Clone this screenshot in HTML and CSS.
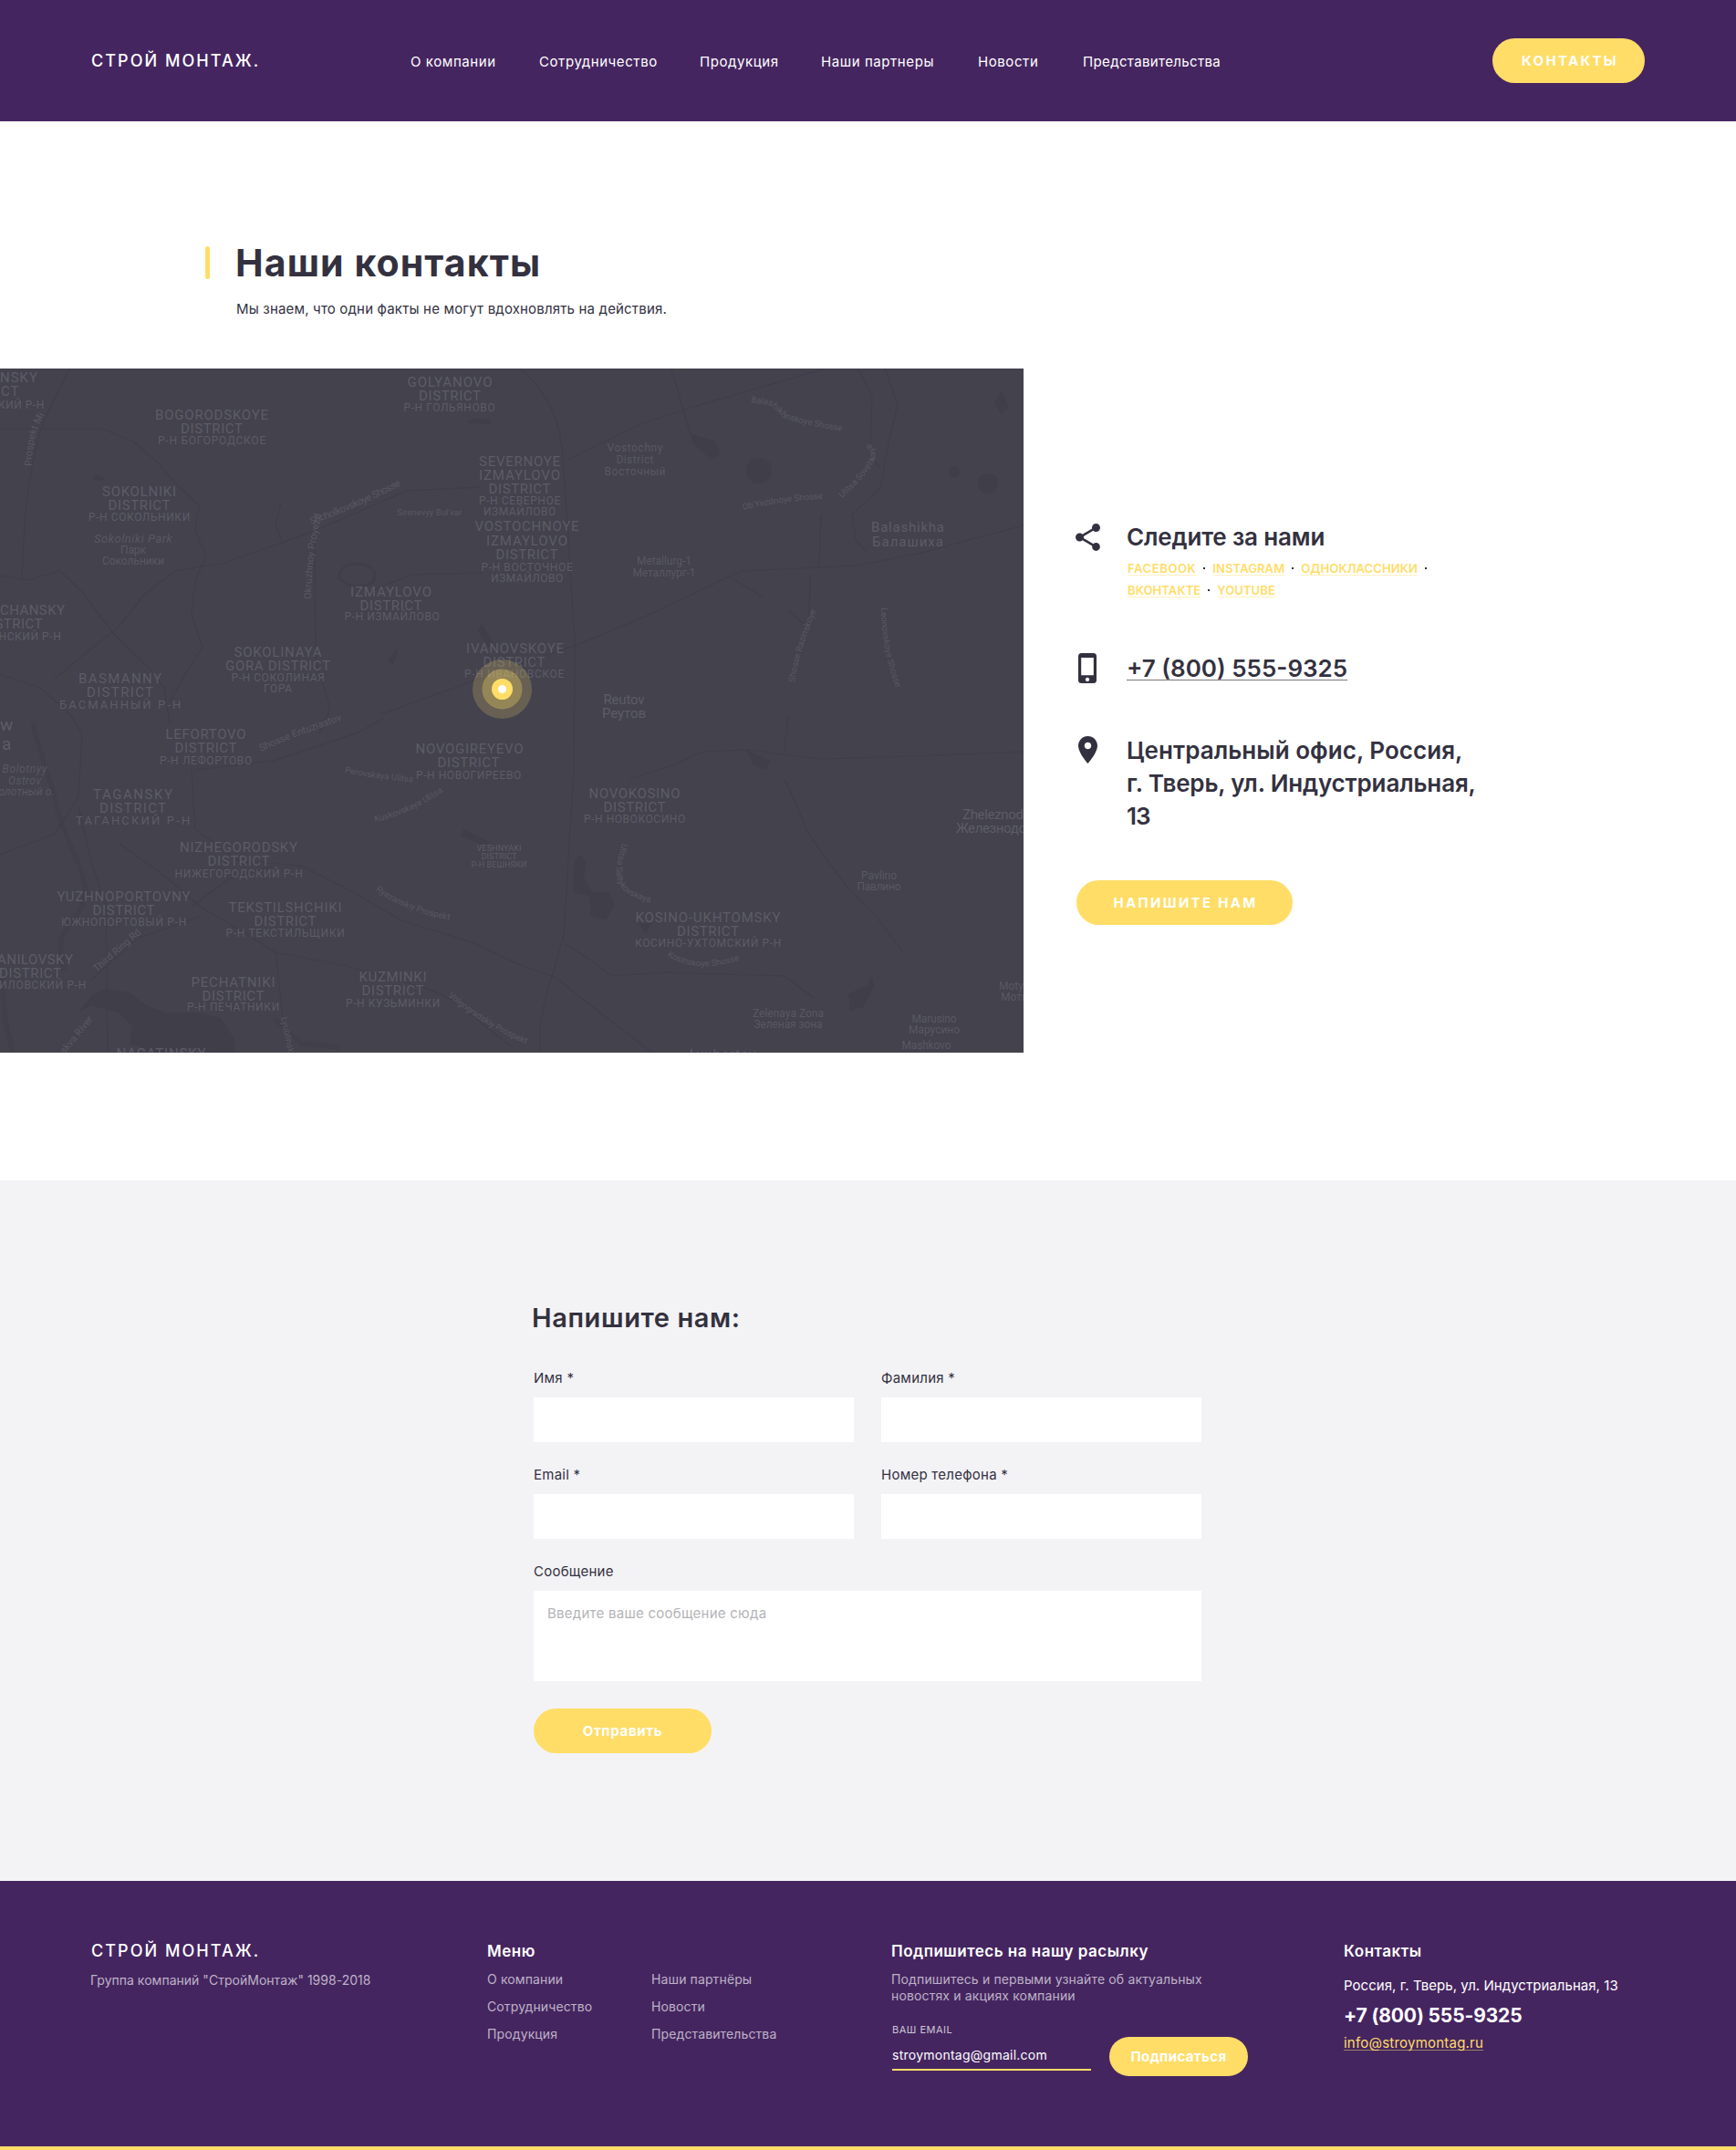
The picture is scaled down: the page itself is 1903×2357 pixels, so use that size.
FILE: index.html
```html
<!DOCTYPE html>
<html lang="ru">
<head>
<meta charset="utf-8">
<title>Строй Монтаж — Контакты</title>
<link rel="stylesheet" href="styles.css">
</head>
<body>
<header class="header">
  <a class="logo">СТРОЙ МОНТАЖ.</a>
  <nav class="nav">
    <a>О компании</a><a>Сотрудничество</a><a>Продукция</a><a>Наши партнеры</a><a>Новости</a><a>Представительства</a>
  </nav>
  <a class="btn btn-header">КОНТАКТЫ</a>
</header>

<main>
<section class="contacts">
  <div class="heading">
    <span class="heading-bar"></span>
    <h1>Наши контакты</h1>
    <p>Мы знаем, что одни факты не могут вдохновлять на действия.</p>
  </div>
  <div class="contacts-grid">
    <svg class="map" viewBox="0 0 1122 750" width="1122" height="750">
      <rect width="1122" height="750" fill="#43424d"/>
      <g class="water">
        <path d="M36 388C42 420 56 450 62 480C70 515 92 545 94 575C90 600 68 610 66 632L70 660"/>
        <path d="M2 668L6 715L14 750"/>
        <path d="M300 712L330 740L372 744"/>
      </g>
      <g class="lake">
        <path d="M102 686l14-6 26 4 18 14 22 8 36 0 24 6 14 22 4 28-16 0-10-12-24-6-24 6-12 12-8 0-6-16-18-6 2-20-14-14-30-8-14 8z"/>
        <path d="M103 123a6 4 0 1 1 10 0zM513 60a13 4 0 1 1 24 1z"/>
        <path d="M524 288l12 18 4-6-12-20zM426 320l8-12 2 3-6 14z"/>
        <circle cx="832" cy="112" r="14"/>
        <path d="M758 72l26 8 6 14-10 6-22-20zM1090 38l8-14 8 18-8 8z"/>
        <circle cx="1046" cy="113" r="6"/><circle cx="1083" cy="126" r="11"/>
        <path d="M630 540q8-14 12 2l-2 18 10 14 18 0 6 14-10 16-16-4-2-22-18-4z"/>
        <path d="M699 608h15l-6 12zM508 505l28 14-4 4-26-10zM818 418l26 12-4 10-14-6z"/>
        <path d="M930 686l20-10 6-10 2 12-12 22-14 4z"/>
      </g>
      <path class="pond" d="M371 230q4-22 32-14q14 8 4 20q-24 8-34-6z"/>
      <g class="road">
        <path d="M76 0L48 58C30 110 26 170 24 232M0 66H112L146 80L172 102L190 124L218 150L214 178L226 206L214 232L210 270L222 305L200 340L184 370"/>
        <path d="M0 227L30 232L66 222L90 245L124 290L165 330L180 350L186 390M60 340L90 315L128 285L158 248L192 222L246 213L340 180L446 134L526 130"/>
        <path d="M308 148L302 172L310 190M345 190L346 320L362 372L350 400M404 245L450 226L530 224M0 335L44 350L76 378L90 400"/>
        <path d="M420 378L540 335L640 300L700 275L762 246L812 222L940 216L1010 202L1122 172"/>
        <path d="M570 0C600 24 616 60 617 100L624 200L630 300L629 440L624 520L618 620C600 690 590 700 592 750"/>
        <path d="M736 0L756 70L764 82M622 100L700 62L760 42L905 0M940 0L956 30L954 90L964 110M970 0L984 40L972 90L966 130L934 160M900 160L898 218M934 160L938 188L950 200"/>
        <path d="M802 230L836 250M864 266L886 284M888 226L887 280M864 380L860 420M690 450L740 434L770 420L820 418L900 428L1000 425L1122 420"/>
        <path d="M860 450L874 480L884 506L900 530L930 570L960 600L990 640M210 440L214 505L262 540L330 545L380 570L440 605L520 630L562 650"/>
        <path d="M90 400L86 470L60 510L0 533M86 480L100 540L116 590L118 750M130 520L180 556L220 590L270 620L302 640L310 712M302 640L380 655L470 680L500 695L562 745"/>
        <path d="M214 440L300 430L390 400L420 384M210 590L250 560L300 545M100 670L150 625L220 600M618 630L650 650L670 666L730 662L860 666L892 690M560 650L610 668L660 708L715 750"/>
      </g>
      <g class="district">
        <text x="0" y="15">NSKY</text><text x="1" y="30">CT</text>
        <g class="mid">
          <text x="232.5" y="56" textLength="125">BOGORODSKOYE</text><text x="232.5" y="71" textLength="69">DISTRICT</text>
          <text x="493.5" y="19.5" textLength="94">GOLYANOVO</text><text x="493.5" y="34.5" textLength="69">DISTRICT</text>
          <text x="153" y="140" textLength="82">SOKOLNIKI</text><text x="153" y="154.5" textLength="69">DISTRICT</text>
          <text x="570" y="106.5" textLength="90">SEVERNOYE</text><text x="570" y="121.5" textLength="90">IZMAYLOVO</text><text x="570" y="136.5" textLength="69">DISTRICT</text>
          <text x="578" y="178" textLength="115">VOSTOCHNOYE</text><text x="578" y="193.5" textLength="90">IZMAYLOVO</text><text x="578" y="208.5" textLength="69">DISTRICT</text>
          <text x="429" y="250" textLength="90">IZMAYLOVO</text><text x="429" y="265" textLength="69">DISTRICT</text>
          <text x="305" y="315.5" textLength="97">SOKOLINAYA</text><text x="305" y="330.5" textLength="116">GORA DISTRICT</text>
          <text x="132" y="344.5" textLength="92">BASMANNY</text><text x="132" y="359.5" textLength="74">DISTRICT</text>
          <text x="565" y="312" textLength="108">IVANOVSKOYE</text><text x="564" y="326.5" textLength="69">DISTRICT</text>
          <text x="226" y="406" textLength="89">LEFORTOVO</text><text x="226" y="421" textLength="69">DISTRICT</text>
          <text x="515" y="422" textLength="119">NOVOGIREYEVO</text><text x="514" y="437" textLength="69">DISTRICT</text>
          <text x="146" y="472" textLength="88">TAGANSKY</text><text x="146" y="487" textLength="74">DISTRICT</text>
          <text x="262" y="530" textLength="130">NIZHEGORODSKY</text><text x="262" y="544.5" textLength="69">DISTRICT</text>
          <text x="136" y="584" textLength="147">YUZHNOPORTOVNY</text><text x="136" y="599" textLength="69">DISTRICT</text>
          <text x="313" y="596" textLength="125">TEKSTILSHCHIKI</text><text x="313" y="610.5" textLength="69">DISTRICT</text>
          <text x="256" y="678" textLength="93">PECHATNIKI</text><text x="256" y="692.5" textLength="69">DISTRICT</text>
          <text x="431" y="672" textLength="75">KUZMINKI</text><text x="431" y="687" textLength="69">DISTRICT</text>
          <text x="177" y="756" textLength="99">NAGATINSKY</text>
          <text x="696" y="471" textLength="101">NOVOKOSINO</text><text x="696" y="485.5" textLength="69">DISTRICT</text>
          <text x="776.5" y="607" textLength="160">KOSINO-UKHTOMSKY</text><text x="776.5" y="622" textLength="69">DISTRICT</text>
        </g>
        <g class="end">
          <text x="72" y="270" textLength="72">CHANSKY</text><text x="47.5" y="285" textLength="53">STRICT</text>
          <text x="81" y="653" textLength="84">ANILOVSKY</text><text x="68" y="668" textLength="69">DISTRICT</text>
        </g>
      </g>
      <g class="native">
        <g class="mid">
          <text x="232.5" y="83" textLength="119">Р-Н БОГОРОДСКОЕ</text>
          <text x="493" y="47" textLength="101">Р-Н ГОЛЬЯНОВО</text>
          <text x="153" y="167" textLength="112">Р-Н СОКОЛЬНИКИ</text>
          <text x="570" y="149" textLength="90">Р-Н СЕВЕРНОЕ</text><text x="570" y="161" textLength="80">ИЗМАЙЛОВО</text>
          <text x="578" y="222" textLength="101">Р-Н ВОСТОЧНОЕ</text><text x="578" y="233.5" textLength="80">ИЗМАЙЛОВО</text>
          <text x="430" y="276" textLength="105">Р-Н ИЗМАЙЛОВО</text>
          <text x="305" y="342.5" textLength="103">Р-Н СОКОЛИНАЯ</text><text x="305" y="354.5" textLength="32">ГОРА</text>
          <text class="big" x="132" y="373" textLength="134">БАСМАННЫЙ Р-Н</text>
          <text x="564" y="339" textLength="110">Р-Н ИВАНОВСКОЕ</text>
          <text x="226" y="434" textLength="102">Р-Н ЛЕФОРТОВО</text>
          <text x="514" y="450" textLength="116">Р-Н НОВОГИРЕЕВО</text>
          <text class="big" x="146" y="500" textLength="126">ТАГАНСКИЙ Р-Н</text>
          <text x="262" y="557.5" textLength="141">НИЖЕГОРОДСКИЙ Р-Н</text>
          <text x="136" y="611" textLength="138">ЮЖНОПОРТОВЫЙ Р-Н</text>
          <text x="313" y="623" textLength="131">Р-Н ТЕКСТИЛЬЩИКИ</text>
          <text x="256" y="704" textLength="102">Р-Н ПЕЧАТНИКИ</text>
          <text x="431" y="699.5" textLength="104">Р-Н КУЗЬМИНКИ</text>
          <text x="696" y="498" textLength="112">Р-Н НОВОКОСИНО</text>
          <text x="776.5" y="634" textLength="161">КОСИНО-УХТОМСКИЙ Р-Н</text>
        </g>
        <g class="end">
          <text x="49" y="44" textLength="51">КИЙ Р-Н</text>
          <text x="67.5" y="298" textLength="69">НСКИЙ Р-Н</text>
          <text x="95" y="680" textLength="96">ИЛОВСКИЙ Р-Н</text>
        </g>
      </g>
      <g class="tiny mid">
        <text x="547" y="529" textLength="49">VESHNYAKI</text><text x="547" y="538" textLength="39">DISTRICT</text><text x="547" y="547" textLength="61">Р-Н ВЕШНЯКИ</text>
      </g>
      <g class="place mid">
        <text class="park" x="146" y="190.5" textLength="86">Sokolniki Park</text><text x="146" y="202.5" textLength="28">Парк</text><text x="146" y="214.5" textLength="68">Сокольники</text>
        <text x="696" y="90.5" textLength="61">Vostochny</text><text x="696" y="104" textLength="41">District</text><text x="696" y="117" textLength="67">Восточный</text>
        <text x="728" y="215" textLength="60">Metallurg-1</text><text x="728" y="228" textLength="69">Металлург-1</text>
        <text class="isle" x="27" y="443" textLength="49">Bolotnyy</text><text class="isle" x="27" y="456" textLength="36">Ostrov</text><text class="isle" x="29" y="468" textLength="61">олотный о.</text>
        <text x="963.5" y="560" textLength="39">Pavlino</text><text x="963.5" y="572" textLength="48">Павлино</text>
        <text x="864" y="711" textLength="78">Zelenaya Zona</text><text x="864" y="723" textLength="75">Зеленая зона</text>
        <text x="1024" y="717" textLength="49">Marusino</text><text x="1024" y="729" textLength="56">Марусино</text><text x="1015.5" y="746" textLength="54">Mashkovo</text>
      </g>
      <g class="place"><text x="1095" y="681">Moty</text><text x="1097" y="693">Мотя</text></g>
      <g class="town">
        <g class="mid">
          <text x="995" y="179" textLength="80">Balashikha</text><text x="995" y="195" textLength="78">Балашиха</text>
          <text x="684" y="368" textLength="45">Reutov</text><text x="684" y="383" textLength="48">Реутов</text>
          <text x="792" y="757" textLength="72">Lyubertsy</text>
        </g>
        <text x="1055" y="494" textLength="67">Zheleznod</text><text x="1048" y="509" textLength="77">Железнодо</text>
      </g>
      <g class="city"><text x="0" y="397">w</text><text x="2" y="418">a</text></g>
      <defs>
        <path id="s1" d="M35 107Q34 75 49 50"/><path id="s2" d="M341 171Q390 154 443 126"/><path id="s3" d="M435 161H520"/>
        <path id="s4" d="M341 253Q341 210 352 160"/><path id="s5" d="M823 37L843 40Q848 42 858 54Q880 62 930 70"/><path id="s6" d="M815 155Q850 146 910 142"/>
        <path id="s7" d="M923 142Q950 118 960 98Q960 90 951 78"/><path id="s8" d="M871 344Q876 310 896 262"/><path id="s9" d="M966 262Q966 310 984 355"/>
        <path id="s10" d="M286 420Q325 402 380 384"/><path id="s11" d="M378 443Q410 450 460 454"/><path id="s12" d="M411 497Q450 489 490 461"/>
        <path id="s13" d="M412 572Q440 595 500 606"/><path id="s14" d="M106 662L160 615"/><path id="s15" d="M491 688Q530 722 585 744"/>
        <path id="s16" d="M308 712Q312 730 318 760"/><path id="s17" d="M71 752L105 710"/><path id="s18" d="M682 520C670 560 673 576 715 586"/>
        <path id="s19" d="M731 644Q765 665 815 647"/>
      </defs>
      <g class="street">
        <text><textPath href="#s1">Prospekt Mira</textPath></text>
        <text><textPath href="#s2" textLength="108">Shcholkovskoye Shosse</textPath></text>
        <text class="sm"><textPath href="#s3">Sirenevyy Bul'var</textPath></text>
        <text><textPath href="#s4">Okruzhnoy Proyezd</textPath></text>
        <text class="sm"><textPath href="#s5">Balashikhinskoye Shosse</textPath></text>
        <text class="sm"><textPath href="#s6">Ob'Yezdnoye Shosse</textPath></text>
        <text class="sm"><textPath href="#s7">Ulitsa Sovetskaya</textPath></text>
        <text class="sm"><textPath href="#s8">Shosse Razinskoye</textPath></text>
        <text class="sm"><textPath href="#s9">Leonovskoye Shosse</textPath></text>
        <text><textPath href="#s10">Shosse Entuziastov</textPath></text>
        <text class="sm"><textPath href="#s11">Perovskaya Ulitsa</textPath></text>
        <text class="sm"><textPath href="#s12">Kuskovskaya Ulitsa</textPath></text>
        <text class="sm"><textPath href="#s13">Ryazanskiy Prospekt</textPath></text>
        <text><textPath href="#s14">Third Ring Rd</textPath></text>
        <text class="sm"><textPath href="#s15">Volgogradskiy Prospekt</textPath></text>
        <text class="sm"><textPath href="#s16">Lyublinsk</textPath></text>
        <text><textPath href="#s17">skva River</textPath></text>
        <text class="sm"><textPath href="#s18">Ulitsa Saltykovskaya</textPath></text>
        <text class="sm"><textPath href="#s19">Kosinskoye Shosse</textPath></text>
      </g>
      <g fill="#ffdd67">
        <circle cx="550.5" cy="351.5" r="32.5" fill-opacity=".2"/>
        <circle cx="550.5" cy="351.5" r="22" fill-opacity=".3"/>
        <circle cx="550.5" cy="351.5" r="11.5"/>
        <circle cx="550.5" cy="351.5" r="4.5" fill="#fff"/>
      </g>
    </svg>
    <div class="info">
      <div class="info-row">
        <svg class="icon" width="27" height="30" viewBox="3 2 18 20"><path d="M18 16.08c-.76 0-1.44.3-1.96.77L8.91 12.7c.05-.23.09-.46.09-.7s-.04-.47-.09-.7l7.05-4.11c.54.5 1.25.81 2.04.81 1.66 0 3-1.34 3-3s-1.34-3-3-3-3 1.34-3 3c0 .24.04.47.09.7L8.04 9.81C7.5 9.31 6.79 9 6 9c-1.66 0-3 1.34-3 3s1.34 3 3 3c.79 0 1.5-.31 2.04-.81l7.12 4.16c-.05.21-.08.43-.08.65 0 1.61 1.31 2.92 2.92 2.92s2.92-1.31 2.92-2.92-1.31-2.92-2.92-2.92z"/></svg>
        <div>
          <h2>Следите за нами</h2>
          <div class="social">
            <a>FACEBOOK</a><i></i><a>INSTAGRAM</a><i></i><a>ОДНОКЛАССНИКИ</a><i></i><br><a>ВКОНТАКТЕ</a><i></i><a>YOUTUBE</a>
          </div>
        </div>
      </div>
      <div class="info-row row-phone">
        <svg class="icon icon-phone" width="20" height="33" viewBox="0 0 20 33"><path fill-rule="evenodd" d="M3.5 0h13A3.5 3.5 0 0 1 20 3.5v26a3.5 3.5 0 0 1-3.5 3.500h-13A3.5 3.5 0 0 1 0 29.5v-26A3.5 3.5 0 0 1 3.5 0zM3.200 5v19.200h13.600V5zM10 26.800a2.200 2.200 0 1 0 .01 0z"/></svg>
        <a class="phone">+7 (800) 555-9325</a>
      </div>
      <div class="info-row row-address">
        <svg class="icon icon-pin" width="21" height="30" viewBox="5 2 14 20"><path d="M12 2C8.13 2 5 5.13 5 9c0 5.25 7 13 7 13s7-7.75 7-13c0-3.87-3.13-7-7-7zm0 9.5c-1.38 0-2.5-1.12-2.5-2.5s1.12-2.5 2.5-2.5 2.5 1.12 2.5 2.5-1.12 2.5-2.5 2.5z"/></svg>
        <p class="address"><span class="wide">Центральный офис, Россия,</span><br>г. Тверь, ул. Индустриальная,<br><span class="tight">13</span></p>
      </div>
      <a class="btn btn-write">НАПИШИТЕ НАМ</a>
    </div>
  </div>
</section>

<section class="write">
  <form class="form">
    <h2>Напишите нам:</h2>
    <div class="fields">
      <label>Имя *<span class="input"></span></label>
      <label>Фамилия *<span class="input"></span></label>
      <label>Email *<span class="input"></span></label>
      <label>Номер телефона *<span class="input"></span></label>
      <label class="full">Сообщение<span class="input area">Введите ваше сообщение сюда</span></label>
    </div>
    <a class="btn btn-send">Отправить</a>
  </form>
</section>
</main>

<footer class="footer">
  <div class="f-brand">
    <a class="logo">СТРОЙ МОНТАЖ.</a>
    <p>Группа компаний "СтройМонтаж" 1998-2018</p>
  </div>
  <div class="f-menu">
    <h3>Меню</h3>
    <div class="f-links">
      <a>О компании</a><a>Наши партнёры</a>
      <a>Сотрудничество</a><a>Новости</a>
      <a>Продукция</a><a>Представительства</a>
    </div>
  </div>
  <div class="f-sub">
    <h3>Подпишитесь на нашу расылку</h3>
    <p>Подпишитесь и первыми узнайте об актуальных<br>новостях и акциях компании</p>
    <div class="f-form">
      <label class="f-field"><span>ВАШ EMAIL</span>stroymontag@gmail.com</label>
      <a class="btn btn-sub">Подписаться</a>
    </div>
  </div>
  <div class="f-contacts">
    <h3>Контакты</h3>
    <p>Россия, г. Тверь, ул. Индустриальная, 13</p>
    <b>+7 (800) 555-9325</b>
    <a>info@stroymontag.ru</a>
  </div>
</footer>
</body>
</html>
```
FILE: styles.css
```css
* { box-sizing: border-box; margin: 0; padding: 0; }

body {
  font-family: Inter, "Open Sans", sans-serif;
  font-size: 15px;
  line-height: 20px;
  color: #33313f;
  background: #fff;
}

h1, h2, h3 { font-weight: 600; }

/* Shared pieces */
.logo {
  display: block;
  font-size: 18px;
  line-height: 24px;
  font-weight: 500;
  letter-spacing: 2.05px;
  color: #fff;
  white-space: nowrap;
}

.btn {
  display: flex;
  align-items: center;
  justify-content: center;
  height: 49px;
  border-radius: 25px;
  background: #ffdd67;
  color: #fff;
  font-weight: 700;
}

/* Header */
.header {
  display: grid;
  grid-template-columns: 350px 1fr 167px;
  align-items: center;
  height: 133px;
  padding: 0 100px;
  background: #452560;
}

.nav {
  display: grid;
  grid-template-columns: 141px 176px 133px 172px 115px auto;
  padding-top: 2px;
  letter-spacing: .58px;
  color: #fff;
}

.nav a:last-child { letter-spacing: .36px; }

.btn-header { letter-spacing: 2.3px; padding-left: 3px; }

/* Contacts */
.contacts { padding: 129px 0 140px; }

.heading {
  display: grid;
  grid-template-columns: 5px 1fr;
  column-gap: 28px;
  align-items: center;
  padding: 0 0 53px 225px;
}

.heading-bar { height: 36px; border-radius: 3px; background: #ffdd67; }

h1 { font-size: 41px; line-height: 52px; font-weight: 700; letter-spacing: 1.1px; }

.heading p { grid-column: 2; margin-top: 13px; line-height: 24px; letter-spacing: .17px; padding-left: 1px; }

.contacts-grid { display: grid; grid-template-columns: 1122px 1fr; }

.map { display: block; overflow: hidden; font-family: Roboto, sans-serif; }
.map text { fill: #5d5c67; }
.district { font-size: 15px; letter-spacing: 1px; }
.native { font-size: 12px; letter-spacing: .8px; }
.native .big { font-size: 13px; }
.tiny { font-size: 9px; }
.mid { text-anchor: middle; }
.end { text-anchor: end; }
.place { font-size: 12px; }
.map .place text { fill: #595863; }
.place .park { font-size: 13px; font-style: italic; }
.place .isle { font-style: italic; }
.town { font-size: 15px; }
.city { font-size: 19px; }
.street { font-size: 11px; }
.map .street text { fill: #595863; }
.street .sm { font-size: 9.6px; }
.road { fill: none; stroke: #3f3e4a; stroke-width: 1.2; stroke-linejoin: round; }
.water { fill: none; stroke: #403f4a; stroke-width: 5; stroke-linejoin: round; }
.lake { fill: #3f3e49; }
.pond { fill: none; stroke: #3f3e49; stroke-width: 3; }

.info { padding: 167px 0 0 57px; }

.info-row {
  display: grid;
  grid-template-columns: 56px 1fr;
  align-items: start;
}

.icon { margin-top: 3px; fill: #33313f; }
.icon-phone { margin: 1px 0 0 3px; }
.icon-pin { margin: 2px 0 0 3px; }

.info h2, .phone, .address {
  font-size: 26px;
  line-height: 36px;
  font-weight: 600;
  letter-spacing: -.15px;
}

.social {
  margin-top: 4px;
  font-size: 13px;
  line-height: 24px;
  font-weight: 600;
  letter-spacing: .1px;
  color: #ffdd67;
  padding-left: 1px;
}

.social a {
  text-decoration: underline 1px #fff0c0;
  text-underline-offset: 2px;
  text-decoration-skip-ink: none;
}

.social a:first-child { letter-spacing: .6px; }

.social i {
  display: inline-block;
  width: 2px;
  height: 2px;
  margin: 0 8px 4px;
  background: #33313f;
}

.row-phone { margin-top: 56px; }

.phone {
  justify-self: start;
  letter-spacing: 0;
  text-decoration: underline 1px #77767f;
  text-underline-offset: 3px;
  text-decoration-skip-ink: none;
}

.row-address { margin-top: 54px; }
.address .wide { letter-spacing: .05px; }
.address .tight { letter-spacing: -1px; }

.btn-write { width: 237px; margin: 52px 0 0 1px; letter-spacing: 2.3px; padding-left: 2px; }

/* Message form */
.write { padding: 131px 0 140px; background: #f3f3f6; }

.form { width: 732px; margin: 0 0 0 585px; }

.form h2 { font-size: 29px; line-height: 40px; letter-spacing: .6px; margin-left: -2px; }

.fields {
  display: grid;
  grid-template-columns: 351px 351px;
  gap: 26px 30px;
  margin-top: 36px;
}

.fields label { letter-spacing: .25px; }
.full { grid-column: 1 / 3; }
.input { display: block; height: 49px; margin-top: 11px; background: #fff; }
.area { height: 99px; padding: 15px; color: #b4b4b8; }
.btn-send { width: 195px; margin-top: 30px; letter-spacing: .7px; }

/* Footer */
.footer {
  display: grid;
  grid-template-columns: 434px 443px 496px 1fr;
  height: 295px;
  padding: 65px 0 0 100px;
  border-bottom: 4px solid #ffdd67;
  background: #452560;
  font-size: 14px;
  color: #bdb3c7;
}

.footer h3 { font-size: 17px; line-height: 24px; letter-spacing: .5px; color: #fff; }

.f-brand p { margin: 10px 0 0 -1px; letter-spacing: .02px; }

.f-links {
  display: grid;
  grid-template-columns: 180px auto;
  margin-top: 4px;
  line-height: 30px;
  letter-spacing: .12px;
}

.f-sub p { margin-top: 10px; line-height: 18px; letter-spacing: .15px; }

.f-form { display: flex; align-items: flex-start; gap: 20px; margin-top: 20px; }

.f-field {
  width: 218px;
  margin-left: 1px;
  padding-bottom: 5px;
  border-bottom: 2px solid #ffdd67;
  letter-spacing: .25px;
  color: #fff;
}

.f-field span {
  display: block;
  margin-bottom: 10px;
  font-size: 11px;
  line-height: 16px;
  letter-spacing: .5px;
  color: #cdc5d4;
}

.btn-sub { width: 152px; height: 43px; margin-top: 16px; font-size: 15px; letter-spacing: .4px; }

.f-contacts { font-size: 15px; color: #fff; }
.f-contacts p { margin-top: 16px; letter-spacing: .04px; }
.f-contacts b { display: block; margin-top: 8px; font-size: 21px; line-height: 30px; letter-spacing: -.12px; }
.f-contacts a {
  display: inline-block;
  margin-top: 5px;
  letter-spacing: .22px;
  color: #ffdd67;
  text-decoration: underline 1px #9a8062;
  text-underline-offset: 2px;
  text-decoration-skip-ink: none;
}
```
